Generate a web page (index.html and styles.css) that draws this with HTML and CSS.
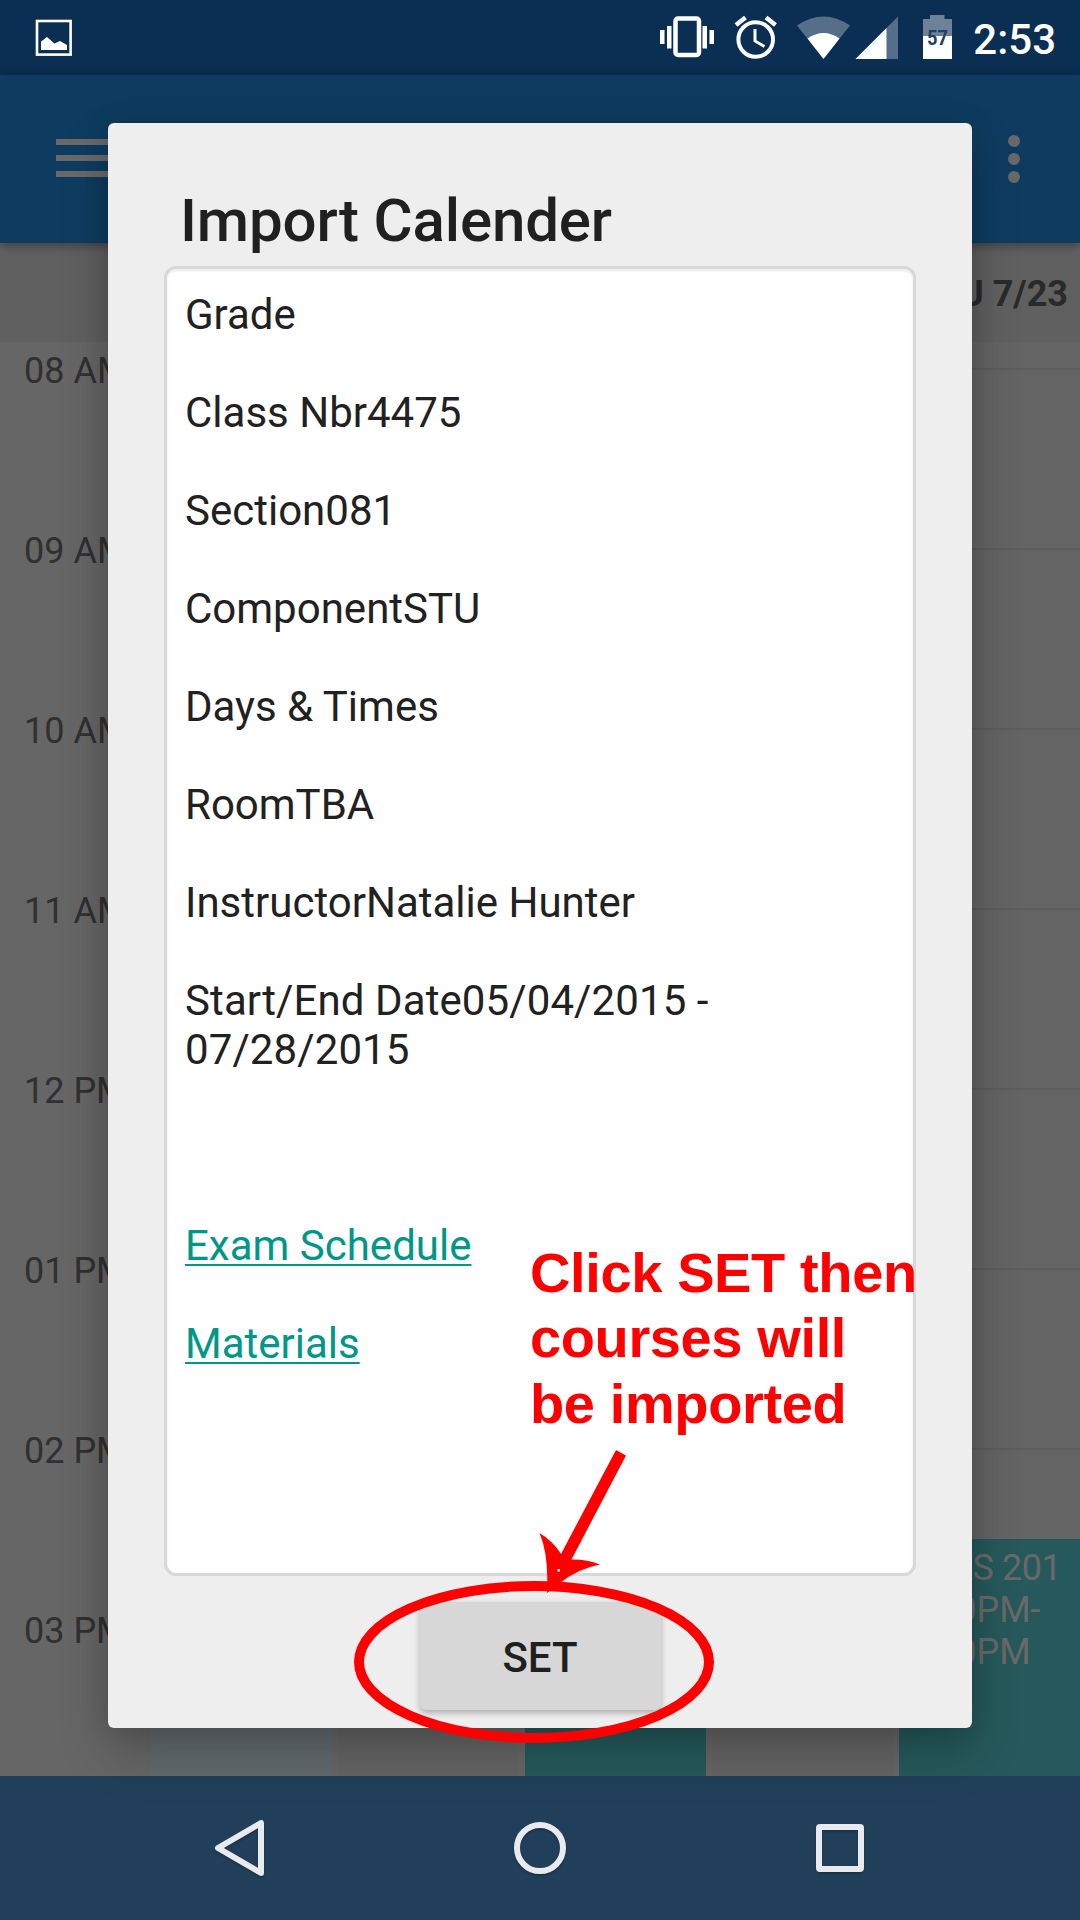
FILE: index.html
```html
<!DOCTYPE html>
<html lang="en">
<head>
<meta charset="utf-8">
<title>Import Calender</title>
<link rel="stylesheet" href="styles.css">
</head>
<body>
<div class="screen">
  <header class="status">
    <svg class="status-icons" width="1080" height="75" viewBox="0 0 1080 75">
      <rect x="37" y="21" width="33.600" height="33.600" fill="none" stroke="#fff" stroke-width="2.600"/>
      <path d="M41 50V41.500L47 37L54.500 43.500L60 41L67 45V50Z" fill="#fff"/>
      <g fill="#fff">
        <rect x="660" y="30" width="4.500" height="14"/>
        <rect x="667" y="26" width="4.500" height="22.500"/>
        <rect x="702.500" y="26" width="4.500" height="22.500"/>
        <rect x="709.500" y="30" width="4.500" height="14"/>
      </g>
      <rect x="675.500" y="18.500" width="23.500" height="36.500" rx="2.500" fill="none" stroke="#fff" stroke-width="4.500"/>
      <g fill="none" stroke="#fff">
        <circle cx="755.700" cy="39.500" r="17.300" stroke-width="4"/>
        <path d="M755 29V41L764.500 46.500" stroke-width="3"/>
        <path d="M736 25L745.500 17.500M766 17.500L775.500 25" stroke-width="4.500"/>
      </g>
      <path d="M823.500 59L797 25.500Q823.500 7.500 850 25.500Z" fill="#566e89"/>
      <path d="M823.500 59L807.500 38.500Q823.500 27.500 839.500 38.500Z" fill="#fff"/>
      <path d="M855.500 59L898 16.500V59Z" fill="#566e89"/>
      <path d="M855.500 59L886.500 28V59Z" fill="#fff"/>
      <path d="M923 36V19H930V15H944.500V19H952V36Z" fill="#6d8198"/>
      <rect x="923" y="36" width="29" height="23" fill="#fff"/>
      <text class="battery-level" x="937.500" y="45" text-anchor="middle" textLength="21" lengthAdjust="spacingAndGlyphs">57</text>
    </svg>
    <span class="clock">2:53</span>
  </header>
  <div class="appbar">
    <div class="menu"><i></i><i></i><i></i></div>
    <div class="more"><i></i><i></i><i></i></div>
  </div>
  <div class="days"><b>THU 7/23</b></div>
  <main class="calendar">
    <div class="hours">
      <span>08 AM</span><span>09 AM</span><span>10 AM</span><span>11 AM</span>
      <span>12 PM</span><span>01 PM</span><span>02 PM</span><span>03 PM</span>
    </div>
    <div class="column today"></div>
    <div class="column"></div>
    <div class="column"><div class="event"></div></div>
    <div class="column"></div>
    <div class="column"><div class="event"><span class="course">CLAS 201</span><br>2:30PM-<br>3:50PM</div></div>
  </main>
  <nav class="nav">
    <svg width="1080" height="144" viewBox="0 0 1080 144" fill="none" stroke="#e8eaed" stroke-width="6" stroke-linejoin="round">
      <path d="M218 72L261 47V97Z"/>
      <circle cx="540" cy="72" r="23"/>
      <rect x="819" y="51" width="42" height="42" rx="1"/>
    </svg>
  </nav>
  <section class="dialog">
    <h1>Import Calender</h1>
    <div class="textbox">
      <p>Grade</p>
      <p>Class Nbr4475</p>
      <p>Section081</p>
      <p>ComponentSTU</p>
      <p>Days &amp; Times</p>
      <p>RoomTBA</p>
      <p>InstructorNatalie Hunter</p>
      <p class="dates">Start/End Date05/04/2015 -<br>07/28/2015</p>
      <p class="blank"></p>
      <p><a>Exam Schedule</a></p>
      <p><a>Materials</a></p>
    </div>
    <button class="set">SET</button>
  </section>
  <div class="note">Click SET then<br>courses will<br>be imported</div>
  <svg class="marks" width="400" height="320" viewBox="340 1440 400 320">
    <ellipse cx="534" cy="1662" rx="175" ry="76" fill="none" stroke="#f00" stroke-width="10"/>
    <path fill="#f00" fill-rule="evenodd" d="M616 1450L626 1455.500L571.500 1559.500Q586 1559 600 1564.500Q577 1569 560 1583L547 1593Q549 1555 539.500 1533Q553 1541 561 1554ZM557.500 1569v2.500h2.500v-2.500Z"/>
  </svg>
</div>
</body>
</html>
```
FILE: styles.css
```css
* { box-sizing: border-box; }
body { margin: 0; font-family: Roboto, sans-serif; }
.screen {
  position: relative;
  width: 1080px;
  height: 1920px;
  overflow: hidden;
  display: flex;
  flex-direction: column;
  background: #666;
}
.status {
  height: 75px;
  flex: none;
  display: grid;
  background: #0b2e53;
}
.status-icons, .clock { grid-area: 1 / 1; }
.battery-level { font: bold 21px Roboto, sans-serif; fill: #213f5d; }
.clock {
  justify-self: end;
  padding-right: 24px;
  color: #fff;
  font-size: 42px;
  font-weight: 500;
  line-height: 79px;
}
.appbar {
  position: relative;
  z-index: 1;
  height: 168px;
  flex: none;
  display: flex;
  justify-content: space-between;
  padding: 60px 60px 0 56px;
  background: #0e3c60;
  box-shadow: 0 2px 10px rgba(0, 0, 0, .4);
}
.menu { display: flex; flex-direction: column; gap: 10px; padding-top: 4px; }
.menu i { width: 72px; height: 6px; background: #696969; }
.more { display: flex; flex-direction: column; gap: 6px; }
.more i { width: 12px; height: 12px; border-radius: 50%; background: #696969; }
.days {
  height: 99px;
  flex: none;
  padding-right: 12px;
  background: #606060;
  color: #2a2a2a;
  font-size: 36px;
  line-height: 102px;
  text-align: right;
}
.calendar {
  flex: 1;
  min-height: 0;
  display: grid;
  grid-template-columns: 145px repeat(5, 181px);
  column-gap: 6px;
  overflow: hidden;
}
.hours { padding: 0 0 0 24px; margin-top: -61px; }
.hours span {
  display: block;
  height: 180px;
  color: #303030;
  font-size: 36px;
  line-height: 180px;
  white-space: nowrap;
}
.column {
  background: repeating-linear-gradient(#5c5c5c 0 2px, transparent 2px 180px) 0 26px #646464;
}
.column.today { background-color: #626a6e; }
.event {
  height: 237px;
  margin-top: 1197px;
  padding: 8px 0 0 8px;
  background: #26595b;
  color: #6b6868;
  font-size: 36px;
  line-height: 42px;
  white-space: nowrap;
}
.course { letter-spacing: -.4px; }
.nav { height: 144px; flex: none; background: #213f5a; }
.nav svg { display: block; filter: drop-shadow(0 2px 1px rgba(0, 0, 0, .2)); }
.dialog {
  position: absolute;
  z-index: 2;
  left: 108px;
  top: 123px;
  width: 864px;
  height: 1605px;
  display: flex;
  flex-direction: column;
  align-items: center;
  padding-top: 63px;
  border-radius: 6px;
  background: #eee;
  box-shadow: 0 24px 50px rgba(0, 0, 0, .22), 0 0 24px rgba(0, 0, 0, .13);
}
h1 {
  align-self: flex-start;
  height: 80px;
  margin: 0;
  padding-left: 72px;
  color: #202020;
  font-size: 60px;
  font-weight: 500;
  letter-spacing: -.15px;
  line-height: 70px;
}
.textbox {
  width: 752px;
  height: 1310px;
  padding: 21px 18px;
  border: 3px solid #d8d8d8;
  border-radius: 12px;
  background: #fff;
  box-shadow: inset 0 2px 3px rgba(0, 0, 0, .08);
  color: #212121;
  font-size: 42px;
  line-height: 49px;
}
.textbox p { margin: 0 0 49px; }
.textbox .dates { letter-spacing: .1px; }
.textbox .blank { height: 49px; }
.textbox a {
  color: #009688;
  text-decoration: underline;
  text-decoration-thickness: 2px;
  text-underline-offset: 4px;
  text-decoration-skip-ink: none;
}
.set {
  width: 241px;
  height: 108px;
  margin: 26px 0 0;
  border: 0;
  border-radius: 6px;
  background: #d7d7d7;
  box-shadow: 0 3px 6px rgba(0, 0, 0, .28);
  color: #202020;
  font: 500 42px/108px Roboto, sans-serif;
  padding: 2px 0 0;
}
.note {
  position: absolute;
  z-index: 3;
  left: 530px;
  top: 1240px;
  color: #f00;
  font: bold 56px/65.300px "Liberation Sans", Arial, sans-serif;
  letter-spacing: -.38px;
  white-space: nowrap;
}
.marks { position: absolute; z-index: 4; left: 340px; top: 1440px; }
```
